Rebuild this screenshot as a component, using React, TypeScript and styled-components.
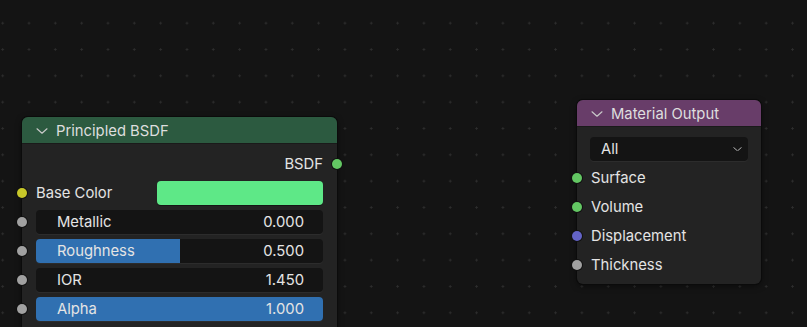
import React from "react";
import styled, { createGlobalStyle } from "styled-components";

const GlobalStyle = createGlobalStyle`
  html, body {
    margin: 0;
    padding: 0;
    width: 100%;
    height: 100%;
    overflow: hidden;
  }
  body {
    background-color: #141414;
    background-image: radial-gradient(circle, #2e2e2e 0.9px, transparent 1.3px);
    background-size: 26.33px 26.33px;
    background-position: -10.5px 10px;
    font-family: Inter, "Noto Sans", "DejaVu Sans", sans-serif;
    color: #e4e4e4;
  }
`;

const SOCKET = {
  shader: "#63c763",
  color: "#c7c729",
  float: "#a1a1a1",
  vector: "#6363c7",
};

const INPUTS = [
  { label: "Metallic", value: "0.000", fill: 0 },
  { label: "Roughness", value: "0.500", fill: 0.5 },
  { label: "IOR", value: "1.450", fill: 0 },
  { label: "Alpha", value: "1.000", fill: 1 },
];

const OUTPUT_INPUTS = [
  { label: "Surface", color: SOCKET.shader },
  { label: "Volume", color: SOCKET.shader },
  { label: "Displacement", color: SOCKET.vector },
  { label: "Thickness", color: SOCKET.float },
];

const Chevron = ({ size = 12 }: { size?: number }) => (
  <svg width={size} height={size / 2} viewBox="0 0 12 6">
    <polyline
      points="1,0.8 6,5.2 11,0.8"
      fill="none"
      stroke="#c8c8c8"
      strokeWidth="1.2"
      strokeLinecap="round"
      strokeLinejoin="round"
    />
  </svg>
);

export default function App() {
  return (
    <>
      <GlobalStyle />
      <Canvas>
        <Node x={22} y={117} w={315}>
          <Header tint="#2c5a40">
            <Chevron />
            Principled BSDF
          </Header>
          <Body top={8}>
            <Row align="right">
              BSDF
              <Socket side="right" color={SOCKET.shader} />
            </Row>
            <Row>
              <Socket side="left" color={SOCKET.color} />
              <RowLabel>Base Color</RowLabel>
              <Swatch />
            </Row>
            {INPUTS.map(({ label, value, fill }) => (
              <Row key={label}>
                <Socket side="left" color={SOCKET.float} />
                <Slider>
                  <SliderFill style={{ width: `${fill * 100}%` }} />
                  <SliderText>{label}</SliderText>
                  <SliderText>{value}</SliderText>
                </Slider>
              </Row>
            ))}
          </Body>
        </Node>

        <Node x={577} y={100} w={184}>
          <Header tint="#683d69">
            <Chevron />
            Material Output
          </Header>
          <Body top={10} bottom={7}>
            <Dropdown>
              All
              <Chevron size={9} />
            </Dropdown>
            {OUTPUT_INPUTS.map(({ label, color }) => (
              <Row key={label}>
                <Socket side="left" color={color} />
                <RowLabel>{label}</RowLabel>
              </Row>
            ))}
          </Body>
        </Node>
      </Canvas>
    </>
  );
}

const Canvas = styled.div`
  position: relative;
  width: 807px;
  height: 327px;
  overflow: hidden;
`;

const Node = styled.div<{ x: number; y: number; w: number }>`
  position: absolute;
  left: ${(p) => p.x}px;
  top: ${(p) => p.y}px;
  width: ${(p) => p.w}px;
  display: flex;
  flex-direction: column;
  border-radius: 6px;
  background: #232323;
  box-shadow: 0 0 0 1px #0b0b0b, 0 2px 6px rgba(0, 0, 0, 0.5);
`;

const Header = styled.div<{ tint: string }>`
  height: 27px;
  display: flex;
  align-items: center;
  gap: 8px;
  padding: 1px 0 0 14px;
  background: ${(p) => p.tint};
  border-radius: 6px 6px 0 0;
  font-size: 14.8px;
  color: #dedede;
  border-bottom: 1px solid #1a1a1a;
  box-sizing: border-box;
`;

const Body = styled.div<{ top: number; bottom?: number }>`
  display: flex;
  flex-direction: column;
  gap: 5px;
  padding: ${(p) => p.top}px 14px ${(p) => p.bottom ?? 40}px 14px;
`;

const Row = styled.div<{ align?: "right" }>`
  position: relative;
  height: 24px;
  display: flex;
  align-items: center;
  justify-content: ${(p) => (p.align === "right" ? "flex-end" : "space-between")};
  font-size: 14.8px;
  color: #e4e4e4;
`;

const RowLabel = styled.span``;

const Socket = styled.span<{ side: "left" | "right"; color: string }>`
  position: absolute;
  top: 50%;
  ${(p) => (p.side === "left" ? "left: -19px;" : "right: -19px;")}
  width: 10px;
  height: 10px;
  margin-top: -5px;
  border-radius: 50%;
  background: ${(p) => p.color};
  box-shadow: 0 0 0 1px #111;
`;

const Swatch = styled.div`
  width: 166px;
  height: 24px;
  border-radius: 4px;
  background: #5ee887;
  box-shadow: 0 1px 0 #161616;
`;

const Slider = styled.div`
  position: relative;
  flex: 1;
  height: 24px;
  display: flex;
  align-items: center;
  justify-content: space-between;
  padding: 0 19px 0 21px;
  border-radius: 4px;
  background: #141414;
  overflow: hidden;
  box-shadow: 0 1px 0 #2c2c2c;
`;

const SliderFill = styled.div`
  position: absolute;
  left: 0;
  top: 0;
  bottom: 0;
  background: #3070b1;
`;

const SliderText = styled.span`
  position: relative;
  color: #e4e4e4;
`;

const Dropdown = styled.div`
  height: 24px;
  margin: 0 -1px;
  display: flex;
  align-items: center;
  justify-content: space-between;
  padding: 0 6px 0 11px;
  border-radius: 4px;
  background: #141414;
  font-size: 14.8px;
  color: #e4e4e4;
  box-shadow: 0 1px 0 #2c2c2c;
`;
